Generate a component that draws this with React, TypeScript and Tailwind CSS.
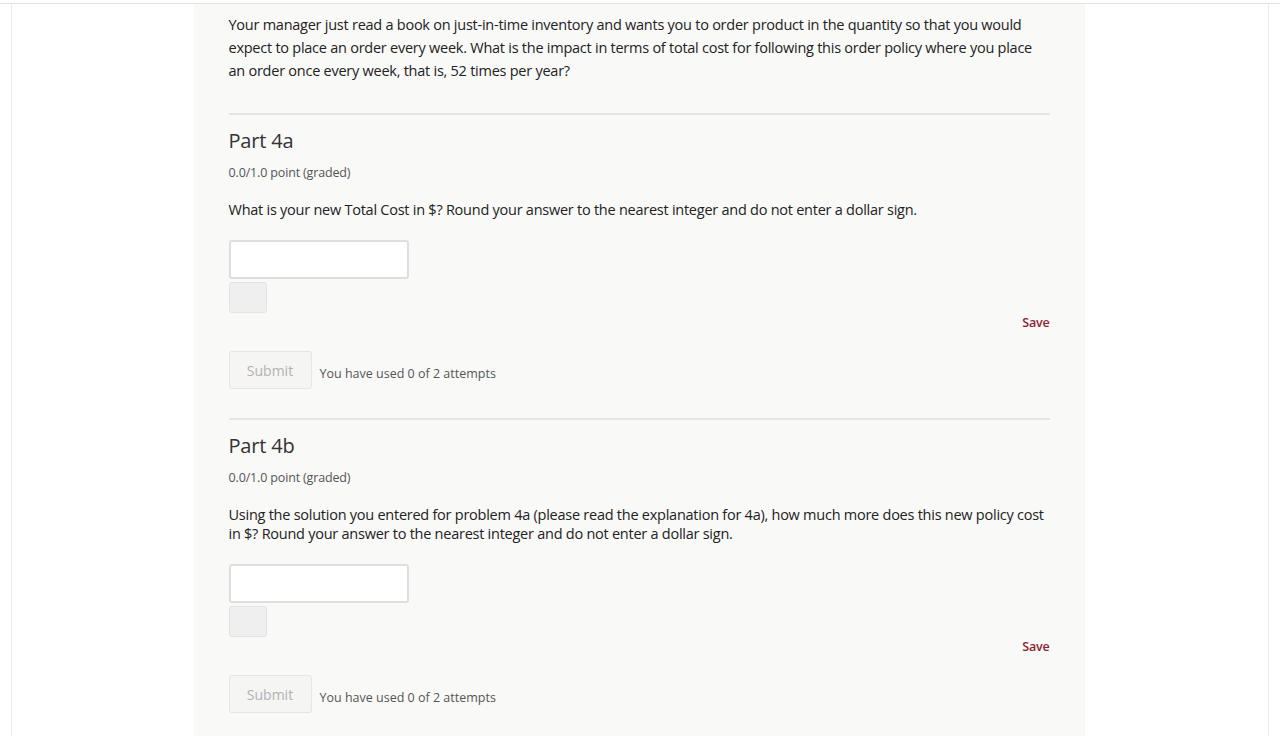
import React from 'react';

type Part = {
  title: string;
  question: string;
};

const parts: Part[] = [
  {
    title: 'Part 4a',
    question:
      'What is your new Total Cost in $? Round your answer to the nearest integer and do not enter a dollar sign.',
  },
  {
    title: 'Part 4b',
    question:
      'Using the solution you entered for problem 4a (please read the explanation for 4a), how much more does this new policy cost in $? Round your answer to the nearest integer and do not enter a dollar sign.',
  },
];

function Problem({ part }: { part: Part }) {
  return (
    <div className="border-t-2 border-[#e5e5e4] pt-[13px]">
      <h3 className="text-[20px] leading-[26px] tracking-[-0.2px] text-[#333]">{part.title}</h3>
      <div className="mt-[12px] text-[12.5px] leading-[14px] tracking-[-0.15px] text-[#555]">0.0/1.0 point (graded)</div>
      <p className="mt-[20px] text-[14.5px] leading-[19px] tracking-[-0.25px] text-[#222]">{part.question}</p>
      <div className="mt-[21px] h-[39px] w-[180px] rounded-[3px] border-2 border-[#dedede] bg-white" />
      <div className="mt-[3px] h-[31px] w-[38px] rounded-[3px] border border-[#e3e3e3] bg-[#efefef]" />
      <div className="flex justify-end">
        <button className="mt-[1px] text-[12.5px] font-semibold leading-[18px] tracking-[-0.2px] text-[#8e1f32]">
          Save
        </button>
      </div>
      <div className="mt-[19px] flex items-end gap-[8px]">
        <button className="h-[38px] w-[83px] rounded-[3px] border border-[#e6e6e6] bg-[#f5f5f4] text-[14px] text-[#b2b2b2]">
          Submit
        </button>
        <span className="mb-[6px] text-[12.5px] leading-[18px] text-[#555]">You have used 0 of 2 attempts</span>
      </div>
      <div className="h-[29px]" />
    </div>
  );
}

export default function App() {
  return (
    <div
      className="min-h-screen bg-white"
      style={{ fontFamily: '"Open Sans", "Liberation Sans", sans-serif' }}
    >
      <div className="h-[3px]" />
      <div className="border-t border-[#e2e2e2]">
        <div className="mx-[11px] flex min-h-[736px] justify-center border-x border-[#ececec] bg-white">
          <div className="ml-[-2px] w-[891px] bg-[#f9f9f8] px-[35px]">
            <p className="pt-[9px] text-[14.5px] leading-[23px] tracking-[-0.25px] text-[#222]">
              Your manager just read a book on just-in-time inventory and wants you to order product in the quantity so
              that you would expect to place an order every week. What is the impact in terms of total cost for following
              this order policy where you place an order once every week, that is, 52 times per year?
            </p>
            <div className="h-[31px]" />
            {parts.map((p) => (
              <Problem key={p.title} part={p} />
            ))}
          </div>
        </div>
      </div>
    </div>
  );
}
